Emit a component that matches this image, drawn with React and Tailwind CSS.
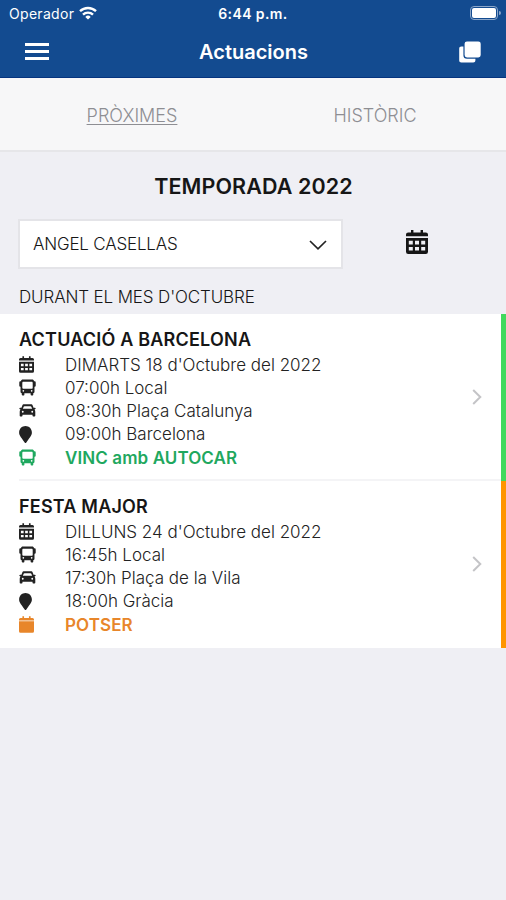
import { useState } from "react"
import { FaMapMarker } from "react-icons/fa"
import clsx from "clsx"

const CalendarIcon = ({ className }) => (
  <svg viewBox="0 0 22 24" className={className} fill="currentColor">
    <path d="M5 0h2.400v2.400h7.200V0H17v2.400h2.800A2.200 2.200 0 0 1 22 4.600v1.600H0V4.600a2.200 2.200 0 0 1 2.200-2.200H5Z" />
    <path
      fillRule="evenodd"
      d="M0 8h22v13.800a2.200 2.200 0 0 1-2.200 2.200H2.200A2.200 2.200 0 0 1 0 21.800ZM2.800 10.800v3.600h4v-3.600ZM9 10.800v3.600h4v-3.600ZM15.200 10.800v3.600h4v-3.600ZM2.800 17v3.600h4V17ZM9 17v3.600h4V17ZM15.200 17v3.600h4V17Z"
    />
  </svg>
)

const MaybeIcon = ({ className }) => (
  <svg viewBox="0 0 22 24" className={className} fill="currentColor">
    <path d="M5 0h2.400v2.400h7.200V0H17v2.400h2.800A2.200 2.200 0 0 1 22 4.600v1.600H0V4.600a2.200 2.200 0 0 1 2.200-2.200H5Z" />
    <path d="M0 7.400h22v14.400a2.200 2.200 0 0 1-2.200 2.200H2.200A2.200 2.200 0 0 1 0 21.800Z" />
  </svg>
)

const BusIcon = ({ className }) => (
  <svg viewBox="0 0 18 18" className={className} fill="currentColor">
    <path
      fillRule="evenodd"
      d="M4.200.6h9.600c1.200 0 1.900.7 2.200 1.900h.6c.7 0 1.100.4 1.100 1.100v3.600c0 .6-.4 1-1.100 1h-.2v5c0 1-.5 1.600-1.300 1.800v1.300c0 .7-.4 1.100-1.100 1.100h-.6c-.7 0-1.100-.4-1.100-1.100V15H5.700v1.300c0 .7-.4 1.100-1.100 1.100H4c-.7 0-1.100-.4-1.100-1.100V15c-.8-.2-1.300-.8-1.300-1.800v-5h-.2c-.7 0-1.100-.4-1.100-1V3.600c0-.7.4-1.100 1.100-1.100H2C2.300 1.300 3 .6 4.200.6ZM4.700 3c-.8 0-1.200.4-1.200 1.200v5c0 .7.4 1 1.100 1h8.800c.7 0 1.100-.3 1.100-1v-5c0-.8-.4-1.200-1.200-1.200H4.700ZM4.600 11.600a.9.900 0 1 0 0 1.800.9.900 0 0 0 0-1.800Zm8.800 0a.9.900 0 1 0 0 1.800.9.900 0 0 0 0-1.800Z"
    />
  </svg>
)

const CarIcon = ({ className }) => (
  <svg viewBox="0 0 18 14" className={className} fill="currentColor">
    <path
      fillRule="evenodd"
      d="M5.400.3h7.200c1.100 0 1.700.5 2.100 1.500l.8 2.200h1.300c.7 0 1 .4 1 .9s-.3.900-1 .9h-.4c.7.700 1 1.500 1 2.500v4c0 .8-.4 1.200-1.200 1.200h-.6c-.8 0-1.200-.4-1.200-1.200v-.6H3.600v.6c0 .8-.4 1.200-1.200 1.200h-.6c-.8 0-1.200-.4-1.200-1.200v-4c0-1 .3-1.800 1-2.500h-.4c-.7 0-1-.4-1-.9s.3-.9 1-.9h1.300l.8-2.200C3.700.8 4.300.3 5.400.3Zm.4 2c-.5 0-.7.2-.9.6l-.9 2.200h10l-.9-2.200c-.2-.4-.4-.6-.9-.6H5.800ZM3.900 7.400a1 1 0 1 0 0 2 1 1 0 0 0 0-2Zm10.200 0a1 1 0 1 0 0 2 1 1 0 0 0 0-2Z"
    />
  </svg>
)

const WifiIcon = () => (
  <svg viewBox="0 0 18 14" className="w-[18px] h-[14px]" fill="none" stroke="white" strokeWidth="2.4">
    <path d="M1 5.200a11.500 11.500 0 0 1 16 0" />
    <path d="M4 8.600a7.200 7.200 0 0 1 10 0" />
    <path d="M9 13.600 6.300 10.900a3.900 3.900 0 0 1 5.400 0Z" fill="white" stroke="none" />
  </svg>
)

const StackIcon = () => (
  <svg viewBox="0 0 22 22" className="w-[22px] h-[22px]" fill="white">
    <path d="M3 5.500h1.400v8.700a3.600 3.600 0 0 0 3.600 3.600h8.400v1.500c0 1.400-.9 2.200-2.200 2.200H2.400C1 21.500.2 20.700.2 19.300V7.700c0-1.400.8-2.200 2.200-2.200Z" />
    <rect x="5.600" y=".4" width="16.100" height="16.100" rx="2.400" />
  </svg>
)

const icons = {
  date: <CalendarIcon className="w-[15px] h-[17px]" />,
  bus: <BusIcon className="w-[17px] h-[17px]" />,
  car: <CarIcon className="w-[17px] h-[13px]" />,
  place: <FaMapMarker className="w-[13px] h-[17px]" />,
  maybe: <MaybeIcon className="w-[15px] h-[17px]" />,
}

const events = [
  {
    title: "ACTUACIÓ A BARCELONA",
    bar: "bg-[#41d95d]",
    color: "text-[#1fa85f]",
    rows: [
      ["date", "DIMARTS 18 d'Octubre del 2022"],
      ["bus", "07:00h Local"],
      ["car", "08:30h Plaça Catalunya"],
      ["place", "09:00h Barcelona"],
    ],
    status: ["bus", "VINC amb AUTOCAR"],
  },
  {
    title: "FESTA MAJOR",
    bar: "bg-[#ff9500]",
    color: "text-[#e8862a]",
    rows: [
      ["date", "DILLUNS 24 d'Octubre del 2022"],
      ["bus", "16:45h Local"],
      ["car", "17:30h Plaça de la Vila"],
      ["place", "18:00h Gràcia"],
    ],
    status: ["maybe", "POTSER"],
  },
]

const Row = ({ icon, children, className }) => (
  <div className={clsx("flex items-center h-[23.2px]", className)}>
    <span className="w-[46px] flex">{icons[icon]}</span>
    <span className="pt-0.5">{children}</span>
  </div>
)

const EventItem = ({ event, last }) => (
  <div className="flex h-[167px] pl-[19px]">
    <div className={clsx("flex flex-1 justify-between", !last && "border-b-2 border-[#f4f4f6]")}>
      <div className="pt-3 text-[17px] text-[#161616]">
        <h2 className="text-[18px] font-semibold leading-[27px] tracking-[0.2px]">{event.title}</h2>
        {event.rows.map(([icon, text]) => (
          <Row key={icon} icon={icon} className="font-light text-[#222]">{text}</Row>
        ))}
        <Row icon={event.status[0]} className={clsx("font-semibold tracking-[0.1px]", event.color)}>{event.status[1]}</Row>
      </div>
      <svg viewBox="0 0 10 16" className="w-[10px] h-4 mt-[75px] mr-[19px]" fill="none" stroke="#c4c4c7" strokeWidth="2">
        <path d="M1.200 1 8.300 8l-7.100 7" />
      </svg>
    </div>
    <div className={clsx("w-[5px]", event.bar)}></div>
  </div>
)

const App = () => {
  const [tab, setTab] = useState("PRÒXIMES")

  return (
    <div className="min-h-screen bg-[#efeff4] font-[Inter,sans-serif] text-[#161616]">
      <header className="h-[78px] bg-[#134b90] text-white border-b border-[#06347f]">
        <div className="grid grid-cols-3 items-center h-[26px] pl-[9px] pr-[5px] leading-none">
          <div className="flex items-center gap-[5px] text-[14px]">
            <span className="pt-px tracking-[0.3px]">Operador</span>
            <WifiIcon />
          </div>
          <span className="text-center font-semibold text-[14px] tracking-[0.4px] pt-px -ml-1">6:44 p.m.</span>
          <div className="flex items-center justify-end gap-px">
            <div className="w-7 h-[14px] rounded-[4px] border border-[#8ba6c9] p-px">
              <div className="h-full rounded-[2px] bg-white"></div>
            </div>
            <div className="w-[2px] h-1 rounded-r bg-[#8ba6c9]"></div>
          </div>
        </div>
        <div className="grid grid-cols-3 items-center h-[51px] pl-[25px] pr-[25px]">
          <button className="flex flex-col gap-[4px] w-6">
            <span className="h-[3px] bg-white"></span>
            <span className="h-[3px] bg-white"></span>
            <span className="h-[3px] bg-white"></span>
          </button>
          <h1 className="text-center text-[20px] font-semibold pl-px">Actuacions</h1>
          <div className="flex justify-end"><StackIcon /></div>
        </div>
      </header>

      <nav className="flex h-[74px] px-[10px] bg-[#f7f7f8] border-b-2 border-[#e6e6e9] text-[18px] font-light text-[#8e8e93]">
        {["PRÒXIMES", "HISTÒRIC"].map((name) => (
          <button
            key={name}
            onClick={() => setTab(name)}
            className={clsx("flex-1 pt-0.5 pl-px", tab === name && "underline underline-offset-2")}
          >
            {name}
          </button>
        ))}
      </nav>

      <main>
        <h2 className="pt-5 pl-px text-center text-[21.500px] leading-[29px] font-semibold tracking-[0.1px]">TEMPORADA 2022</h2>
        <div className="flex items-center mt-[18px] pl-[18px]">
          <div className="flex items-center justify-between w-[325px] h-[50px] pl-[13px] pr-[14px] bg-white border-2 border-[#e4e4e8] text-[17px] font-light">
            <span className="pt-0.5 tracking-[-0.2px]">ANGEL CASELLAS</span>
            <svg viewBox="0 0 18 10" className="w-[18px] h-[10px] mt-0.5" fill="none" stroke="#222" strokeWidth="1.700">
              <path d="m1 1 8 7.800L17 1" />
            </svg>
          </div>
          <button className="ml-[63px] mb-1"><CalendarIcon className="w-[22px] h-6" /></button>
        </div>
        <p className="pl-[19px] pt-[15px] h-[45px] text-[17px] leading-[26px] font-light tracking-[-0.13px]">DURANT EL MES D'OCTUBRE</p>
        <div className="bg-white">
          {events.map((event, i) => (
            <EventItem key={event.title} event={event} last={i === events.length - 1} />
          ))}
        </div>
      </main>
    </div>
  )
}

export default App
